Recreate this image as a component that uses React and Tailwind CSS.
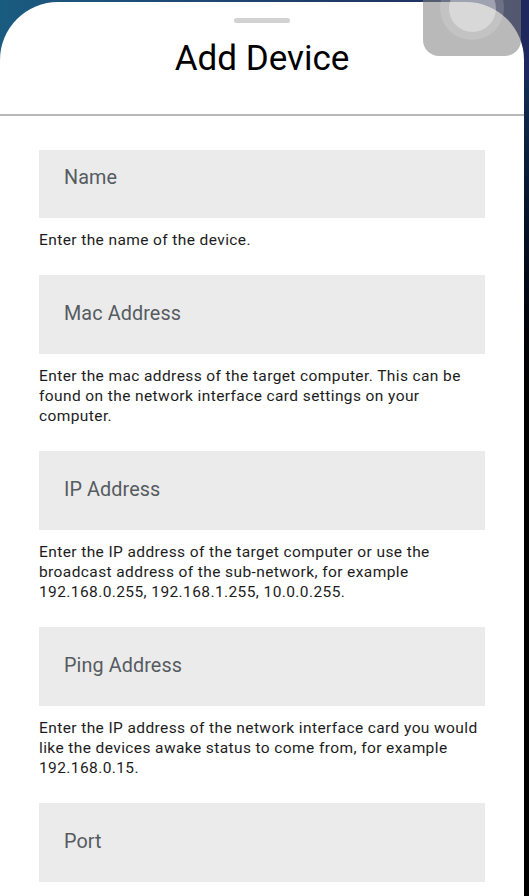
import React from "react";

const fields = [
  { label: "Mac Address", help: "Enter the mac address of the target computer. This can be found on the network interface card settings on your computer." },
  { label: "IP Address", help: "Enter the IP address of the target computer or use the broadcast address of the sub-network, for example 192.168.0.255, 192.168.1.255, 10.0.0.255." },
  { label: "Ping Address", help: "Enter the IP address of the network interface card you would like the devices awake status to come from, for example 192.168.0.15." },
  { label: "Port", help: "" },
];

const Field = ({ label, help }) => (
  <div>
    <div className="h-[79px] bg-[#ebebeb] flex items-center px-[25px]">
      <span className="text-[19.8px] tracking-[0.1px] text-[#565b61]">{label}</span>
    </div>
    {help && (
      <p className="mt-[12px] mb-[25px] text-[15.5px] tracking-[0.4px] leading-[20px] text-[#1c1c1c]">{help}</p>
    )}
  </div>
);

const App = () => {
  return (
    <div
      className="relative h-[896px] w-full overflow-hidden bg-gradient-to-b from-[#1c3f6e] via-black to-black"
      style={{ fontFamily: "Roboto, 'Noto Sans', sans-serif" }}
    >
      <div className="absolute inset-x-0 top-0 h-[80px] bg-gradient-to-r from-[#1a5b80] to-[#1e285c]" />

      <div className="relative mt-[2px] w-[524px] h-[894px] bg-white rounded-t-[58px] flex flex-col">
        <div className="mx-auto mt-[16px] h-[5px] w-[56px] rounded-full bg-[#d2d2d2]" />
        <h1 className="mt-[15px] text-center text-[35px] leading-[41px] text-black">Add Device</h1>
        <div className="mt-[35px] h-[1.5px] bg-[#b8b8b8]" />

        <div className="px-[39px] pt-[34px]">
          <div className="h-[68px] bg-[#ebebeb] flex items-center px-[25px] pb-[11px]">
            <span className="text-[19.8px] tracking-[0.1px] text-[#565b61]">Name</span>
          </div>
          <p className="mt-[12px] mb-[25px] text-[15.5px] tracking-[0.4px] leading-[20px] text-[#1c1c1c]">
            Enter the name of the device.
          </p>
          {fields.map((f) => (
            <Field key={f.label} label={f.label} help={f.help} />
          ))}
        </div>
      </div>

      {/* floating assistive button */}
      <div className="absolute left-[423px] top-[-40px] h-[96px] w-[98px] rounded-[16px] bg-[#7f7f7f]/55 flex items-center justify-center">
        <div className="h-[64px] w-[64px] rounded-full bg-white/15 flex items-center justify-center">
          <div className="h-[47px] w-[47px] rounded-full bg-white/35" />
        </div>
      </div>
    </div>
  );
};

export default App;
